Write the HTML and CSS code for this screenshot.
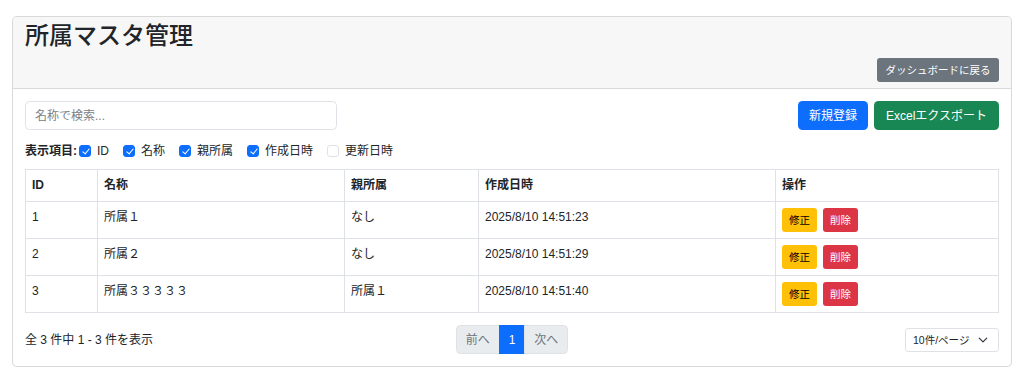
FILE: index.html
```html
<!DOCTYPE html>
<html>
  <head>
    <meta charset="utf-8">
    <link rel="stylesheet" href="styles.css">
  </head>

  <body>
    <div class="page">
      <div class="card">
        <div class="card-header">
          <h1 class="title">所属マスタ管理</h1>
          <div class="header-actions">
            <button class="btn btn-sm btn-secondary">ダッシュボードに戻る</button>
          </div>
        </div>

        <div class="card-body">
          <div class="toolbar">
            <input class="search" type="text" placeholder="名称で検索...">
            <div class="toolbar-buttons">
              <button class="btn btn-primary">新規登録</button>
              <button class="btn btn-success">Excelエクスポート</button>
            </div>
          </div>

          <div class="columns">
            <span class="columns-label">表示項目:</span>
            <label class="check"><span class="box on"></span>ID</label>
            <label class="check"><span class="box on"></span>名称</label>
            <label class="check"><span class="box on"></span>親所属</label>
            <label class="check"><span class="box on"></span>作成日時</label>
            <label class="check"><span class="box"></span>更新日時</label>
          </div>

          <table class="grid">
            <thead>
              <tr>
                <th class="col-id">ID</th>
                <th class="col-name">名称</th>
                <th class="col-parent">親所属</th>
                <th class="col-date">作成日時</th>
                <th class="col-ops">操作</th>
              </tr>
            </thead>
            <tbody>
              <tr>
                <td>1</td>
                <td>所属１</td>
                <td>なし</td>
                <td>2025/8/10 14:51:23</td>
                <td><button class="btn btn-xs btn-warning">修正</button><button class="btn btn-xs btn-danger">削除</button></td>
              </tr>
              <tr>
                <td>2</td>
                <td>所属２</td>
                <td>なし</td>
                <td>2025/8/10 14:51:29</td>
                <td><button class="btn btn-xs btn-warning">修正</button><button class="btn btn-xs btn-danger">削除</button></td>
              </tr>
              <tr>
                <td>3</td>
                <td>所属３３３３３</td>
                <td>所属１</td>
                <td>2025/8/10 14:51:40</td>
                <td><button class="btn btn-xs btn-warning">修正</button><button class="btn btn-xs btn-danger">削除</button></td>
              </tr>
            </tbody>
          </table>

          <div class="footer">
            <div class="count">全 3 件中 1 - 3 件を表示</div>
            <ul class="pager">
              <li class="pager-item disabled">前へ</li>
              <li class="pager-item active">1</li>
              <li class="pager-item disabled">次へ</li>
            </ul>
            <div class="per-page-wrap">
              <div class="per-page">
                <span>10件/ページ</span>
                <svg width="10" height="10" viewBox="0 0 16 16"><path d="M2 5l6 6 6-6" fill="none" stroke="#343a40" stroke-width="2" stroke-linecap="round" stroke-linejoin="round"/></svg>
              </div>
            </div>
          </div>
        </div>
      </div>
    </div>
  </body>
</html>
```

FILE: styles.css
```css
* {
  margin: 0;
  padding: 0;
  box-sizing: border-box;
}

body {
  font-family: "Liberation Sans", "Noto Sans CJK JP", sans-serif;
  font-size: 12px;
  line-height: 18px;
  color: #212529;
  background: #fff;
}

.page {
  padding: 16px 12px 0 12px;
}

/* Card */
.card {
  border: 1px solid #d9d9d9;
  border-radius: 4.5px;
  overflow: hidden;
}
.card-header {
  background: #f7f7f7;
  border-bottom: 1px solid #d9d9d9;
  padding: 6px 12px;
}
.title {
  font-size: 24px;
  line-height: 26px;
  font-weight: 500;
  margin-bottom: 9px;
}
.header-actions {
  display: flex;
  justify-content: flex-end;
}
.card-body {
  padding: 12px;
}

/* Buttons */
.btn {
  font-family: inherit;
  font-size: 12px;
  line-height: 18px;
  padding: 4.5px 10px;
  border: 1px solid transparent;
  border-radius: 4.5px;
  color: #fff;
  cursor: pointer;
}
.btn-sm {
  font-size: 10.5px;
  line-height: 16px;
  padding: 3px 7.5px;
  border-radius: 3px;
}
.btn-xs {
  font-size: 10.5px;
  line-height: 16px;
  padding: 3px 6px;
  border-radius: 3px;
  margin-right: 6px;
}
.btn-secondary { background: #6c757d; }
.btn-primary { background: #0d6efd; }
.btn-success { background: #198754; padding: 4.5px 11px; }
.btn-warning { background: #ffc107; color: #000; }
.btn-danger { background: #dc3545; }

/* Toolbar */
.toolbar {
  display: flex;
  justify-content: space-between;
  align-items: center;
}
.toolbar-buttons {
  display: flex;
  gap: 6px;
}
.search {
  width: 312px;
  height: 29px;
  padding: 4.5px 9px;
  font-family: inherit;
  font-size: 12px;
  border: 1px solid #dee2e6;
  border-radius: 4.5px;
  color: #212529;
}
.search::placeholder {
  color: #7a8087;
}

/* Column toggles */
.columns {
  display: flex;
  align-items: center;
  margin: 12px 0 9px 0;
}
.columns-label {
  font-weight: bold;
  margin-right: 2px;
}
.check {
  display: flex;
  align-items: center;
  margin-right: 14px;
}
.box {
  width: 12px;
  height: 12px;
  border: 1px solid #dee2e6;
  border-radius: 3px;
  margin-right: 6px;
  background: #fff;
  position: relative;
}
.box.on {
  background: #0d6efd;
  border-color: #0d6efd;
}
.box.on::after {
  content: "";
  position: absolute;
  left: 3.5px;
  top: 1px;
  width: 3px;
  height: 6px;
  border-right: 1.5px solid #fff;
  border-bottom: 1.5px solid #fff;
  transform: rotate(40deg);
}

/* Table */
.grid {
  width: 100%;
  border-collapse: collapse;
  margin-bottom: 12px;
}
.grid th,
.grid td {
  border: 1px solid #dee2e6;
  padding: 6px;
  text-align: left;
  vertical-align: top;
}
.grid th {
  font-weight: bold;
  padding-bottom: 7px;
}
.col-id { width: 72px; }
.col-name { width: 247px; }
.col-parent { width: 134px; }
.col-date { width: 297px; }

/* Footer */
.footer {
  display: grid;
  grid-template-columns: 1fr auto 1fr;
  align-items: center;
}
.pager {
  list-style: none;
  display: flex;
}
.pager-item {
  padding: 4.5px 9px;
  border: 1px solid #dee2e6;
  margin-left: -1px;
}
.pager-item:first-child {
  margin-left: 0;
  border-radius: 4.5px 0 0 4.5px;
}
.pager-item:last-child {
  border-radius: 0 4.5px 4.5px 0;
}
.pager-item.disabled {
  background: #e9ecef;
  color: #6c757d;
}
.pager-item.active {
  background: #0d6efd;
  border-color: #0d6efd;
  color: #fff;
}
.per-page-wrap {
  display: flex;
  justify-content: flex-end;
}
.per-page {
  width: 94px;
  height: 24px;
  display: flex;
  align-items: center;
  justify-content: space-between;
  padding: 0 10px 0 7px;
  border: 1px solid #dee2e6;
  border-radius: 3px;
  font-size: 10.5px;
}
```
